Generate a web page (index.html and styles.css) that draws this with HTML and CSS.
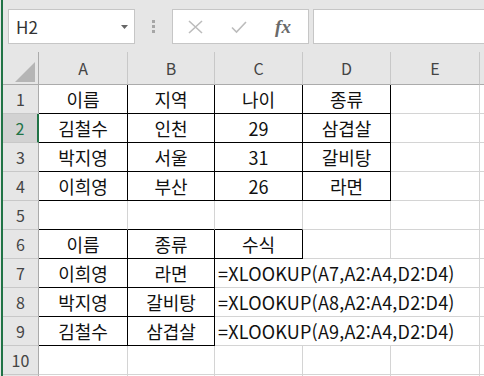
FILE: index.html
```html
<!DOCTYPE html>
<html lang="ko">
<head>
  <meta charset="UTF-8">
  <title>XLOOKUP - Excel</title>
  <link rel="stylesheet" href="styles.css">
</head>
<body>
  <div class="window">
    <div class="formula-bar">
      <div class="name-box">
        <span>H2</span>
        <svg class="drop" width="7" height="4" viewBox="0 0 7 4"><polygon points="0,0 7,0 3.5,4" fill="#666"/></svg>
      </div>
      <div class="grip"><i></i><i></i><i></i></div>
      <div class="fx-buttons">
        <span class="btn">
          <svg width="15" height="14" viewBox="0 0 15 14"><path d="M1 1 L14 13 M14 1 L1 13" stroke="#bcbcbc" stroke-width="1.6" fill="none"/></svg>
        </span>
        <span class="btn">
          <svg width="16" height="14" viewBox="0 0 16 14"><path d="M1 7.5 L5.5 12 L15 2" stroke="#bcbcbc" stroke-width="1.6" fill="none"/></svg>
        </span>
        <span class="btn fx">fx</span>
      </div>
      <div class="fx-input"></div>
    </div>

    <div class="sheet">
      <div class="col-head corner">
        <svg width="20" height="20" viewBox="0 0 20 20"><polygon points="20,0 20,20 0,20" fill="#b5b5b5"/></svg>
      </div>
      <div class="col-head">A</div>
      <div class="col-head">B</div>
      <div class="col-head">C</div>
      <div class="col-head">D</div>
      <div class="col-head">E</div>
      <div class="col-head"></div>

      <div class="row-head">1</div>
      <div class="bd">이름</div>
      <div class="bd">지역</div>
      <div class="bd">나이</div>
      <div class="bd">종류</div>
      <div></div>
      <div></div>

      <div class="row-head sel">2</div>
      <div class="bd">김철수</div>
      <div class="bd">인천</div>
      <div class="bd">29</div>
      <div class="bd">삼겹살</div>
      <div></div>
      <div></div>

      <div class="row-head">3</div>
      <div class="bd">박지영</div>
      <div class="bd">서울</div>
      <div class="bd">31</div>
      <div class="bd">갈비탕</div>
      <div></div>
      <div></div>

      <div class="row-head">4</div>
      <div class="bd">이희영</div>
      <div class="bd">부산</div>
      <div class="bd">26</div>
      <div class="bd">라면</div>
      <div></div>
      <div></div>

      <div class="row-head">5</div>
      <div class="bd-b"></div>
      <div class="bd-b"></div>
      <div class="bd-b"></div>
      <div></div>
      <div></div>
      <div></div>

      <div class="row-head">6</div>
      <div class="bd">이름</div>
      <div class="bd">종류</div>
      <div class="bd">수식</div>
      <div></div>
      <div></div>
      <div></div>

      <div class="row-head">7</div>
      <div class="bd">이희영</div>
      <div class="bd">라면</div>
      <div class="formula">=XLOOKUP(A7,A2:A4,D2:D4)</div>
      <div></div>

      <div class="row-head">8</div>
      <div class="bd">박지영</div>
      <div class="bd">갈비탕</div>
      <div class="formula">=XLOOKUP(A8,A2:A4,D2:D4)</div>
      <div></div>

      <div class="row-head">9</div>
      <div class="bd">김철수</div>
      <div class="bd">삼겹살</div>
      <div class="formula">=XLOOKUP(A9,A2:A4,D2:D4)</div>
      <div></div>

      <div class="row-head">10</div>
      <div></div>
      <div></div>
      <div></div>
      <div></div>
      <div></div>
      <div></div>

      <div class="row-head"></div>
      <div></div>
      <div></div>
      <div></div>
      <div></div>
      <div></div>
      <div></div>
    </div>
  </div>
</body>
</html>
```

FILE: styles.css
```css
* {
  box-sizing: border-box;
}

body {
  margin: 0;
  height: 376px;
  overflow: hidden;
  background-color: #e6e6e6;
  font-family: "Noto Sans CJK KR", "Noto Sans", sans-serif;
}

.window {
  margin-left: 1px;
  height: 376px;
  overflow: hidden;
  border-left: 2px solid #217346;
}

/* formula bar */
.formula-bar {
  display: flex;
  align-items: flex-start;
  height: 52px;
  padding: 9px 0 0 5px;
}

.name-box {
  width: 127px;
  height: 35px;
  background: #fff;
  border: 1px solid #c6c6c6;
  display: flex;
  align-items: center;
  justify-content: space-between;
  padding: 0 6px 0 7px;
  font-size: 17px;
  color: #333;
}

.grip {
  width: 37px;
  display: flex;
  flex-direction: column;
  align-items: center;
  gap: 2px;
  padding-top: 11px;
}

.grip i {
  display: block;
  width: 3px;
  height: 3px;
  background: #a6a6a6;
}

.fx-buttons {
  width: 137px;
  height: 35px;
  background: #fff;
  border: 1px solid #c6c6c6;
  display: flex;
  align-items: center;
}

.btn {
  width: 44px;
  display: flex;
  justify-content: center;
  align-items: center;
}

.btn.fx {
  font-family: "Liberation Serif", serif;
  font-style: italic;
  font-weight: bold;
  font-size: 19px;
  color: #6a6a6a;
}

.fx-input {
  flex: 1;
  height: 35px;
  margin-left: 4px;
  background: #fff;
  border: 1px solid #c6c6c6;
  border-right: none;
}

/* sheet grid */
.sheet {
  display: grid;
  grid-template-columns: 36px 89px 87px 88px 88px 89px 30px;
  grid-template-rows: 33px repeat(11, 29px);
  background: #fff;
}

.sheet > div {
  display: flex;
  align-items: center;
  justify-content: center;
  white-space: nowrap;
  border-right: 1px solid #d4d4d4;
  border-bottom: 1px solid #d4d4d4;
  font-size: 18px;
  color: #111;
}

.sheet > .col-head {
  background: #e6e6e6;
  border-right-color: #c8c8c8;
  border-bottom-color: #ababab;
  font-size: 16px;
  color: #444;
}

.sheet > .corner {
  align-items: flex-end;
  justify-content: flex-end;
  padding: 0 3px 2px 0;
  border-right-color: #ababab;
}

.sheet > .row-head {
  background: #e6e6e6;
  border-right-color: #ababab;
  border-bottom-color: #c8c8c8;
  font-size: 16px;
  color: #444;
}

.sheet > .row-head.sel {
  background: #d2d2d2;
  color: #217346;
  border-right: 2px solid #217346;
}

.sheet > .bd {
  border-right-color: #000;
  border-bottom-color: #000;
}

.sheet > .bd-b {
  border-bottom-color: #000;
}

.sheet > .formula {
  grid-column: span 3;
  justify-content: flex-start;
  padding-left: 3px;
  letter-spacing: 0.2px;
}
```
